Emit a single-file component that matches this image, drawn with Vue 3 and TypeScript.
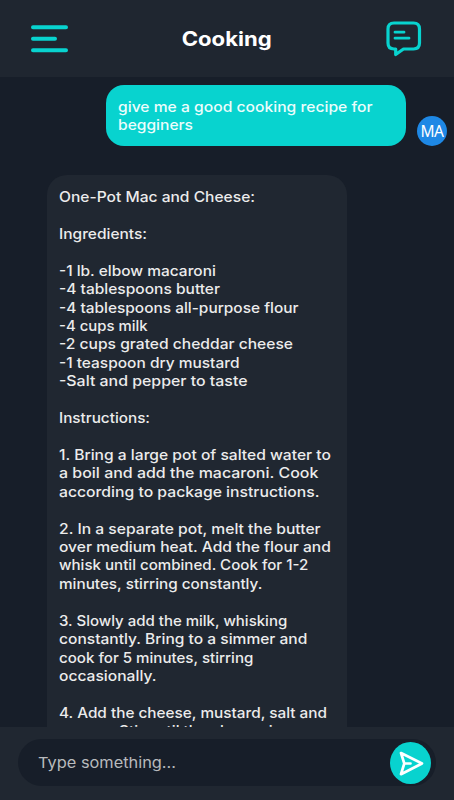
<script setup lang="ts">
interface Line {
  text: string
  width: number
}

const BODY_FONT = '500 14.5px Inter'
const context = document.createElement('canvas').getContext('2d')

// Horizontal stretch that makes a line of text fill its designed width
function stretch(line: Line, font: string = BODY_FONT): string {
  if (!context || !line.text) return 'none'
  context.font = font
  const natural = context.measureText(line.text).width
  return `scaleX(${(line.width / natural).toFixed(4)})`
}

const title: Line = { text: 'Cooking', width: 90 }
const placeholder: Line = { text: 'Type something...', width: 138 }

const question: Line[] = [
  { text: 'give me a good cooking recipe for', width: 254.5 },
  { text: 'begginers', width: 75 },
]

const answer: Line[] = [
  { text: 'One-Pot Mac and Cheese:', width: 196 },
  { text: '', width: 0 },
  { text: 'Ingredients:', width: 88 },
  { text: '', width: 0 },
  { text: '-1 lb. elbow macaroni', width: 157 },
  { text: '-4 tablespoons butter', width: 161 },
  { text: '-4 tablespoons all-purpose flour', width: 239.5 },
  { text: '-4 cups milk', width: 88.5 },
  { text: '-2 cups grated cheddar cheese', width: 234 },
  { text: '-1 teaspoon dry mustard', width: 180.5 },
  { text: '-Salt and pepper to taste', width: 188.5 },
  { text: '', width: 0 },
  { text: 'Instructions:', width: 91 },
  { text: '', width: 0 },
  { text: '1. Bring a large pot of salted water to', width: 272 },
  { text: 'a boil and add the macaroni. Cook', width: 259.5 },
  { text: 'according to package instructions.', width: 260.5 },
  { text: '', width: 0 },
  { text: '2. In a separate pot, melt the butter', width: 262 },
  { text: 'over medium heat. Add the flour and', width: 272 },
  { text: 'whisk until combined. Cook for 1-2', width: 249.5 },
  { text: 'minutes, stirring constantly.', width: 203.5 },
  { text: '', width: 0 },
  { text: '3. Slowly add the milk, whisking', width: 228.5 },
  { text: 'constantly. Bring to a simmer and', width: 248.5 },
  { text: 'cook for 5 minutes, stirring', width: 194.5 },
  { text: 'occasionally.', width: 97.5 },
  { text: '', width: 0 },
  { text: '4. Add the cheese, mustard, salt and', width: 268.5 },
  { text: 'pepper. Stir until the cheese is', width: 222 },
]
</script>

<template>
  <div class="screen">
    <header class="header">
      <svg class="menu" viewBox="0 0 38 30" width="38" height="30">
        <path d="M3 3.2H36M3 14.7H25M3 26.2H36" />
      </svg>
      <h1 class="title" :style="{ transform: stretch(title, '700 20px Inter') }">{{ title.text }}</h1>
      <svg class="chat" viewBox="0 0 36 36" width="36" height="36">
        <path class="outline" d="M8 2H27.5Q33.5 2 33.5 8V22Q33.5 28 27.5 28H17.5L9.7 33.5V28H8Q2 28 2 22V8Q2 2 8 2Z" />
        <path class="rows" d="M9 11.2H18M9 17.2H23" />
      </svg>
    </header>

    <main class="chat-list">
      <div class="row user">
        <div class="bubble sent">
          <p v-for="(line, i) in question" :key="i" class="line" :style="{ transform: stretch(line) }">{{ line.text }}</p>
        </div>
        <div class="avatar">MA</div>
      </div>
      <div class="bubble received">
        <p v-for="(line, i) in answer" :key="i" class="line" :style="{ transform: stretch(line) }">{{ line.text }}</p>
      </div>
    </main>

    <footer class="footer">
      <div class="input">
        <span class="placeholder" :style="{ transform: stretch(placeholder, '400 15px Inter') }">{{ placeholder.text }}</span>
        <button class="send" aria-label="Send">
          <svg viewBox="0 0 41 42" width="41" height="42">
            <path d="M11 11L32 21.5L11 32.2L14.3 21.5ZM14.3 21.5H20.5" />
          </svg>
        </button>
      </div>
    </footer>
  </div>
</template>

<style>
body {
  margin: 0;
  background: #171e29;
}
</style>

<style scoped>
.screen {
  box-sizing: border-box;
  width: 454px;
  height: 800px;
  display: flex;
  flex-direction: column;
  overflow: hidden;
  background: #171e29;
  color: #ececec;
  font-family: Inter, "Liberation Sans", sans-serif;
}
.header {
  box-sizing: border-box;
  flex: 0 0 77px;
  display: grid;
  grid-template-columns: 38px 1fr 36px;
  align-items: center;
  padding: 0 32px 0 30px;
  background: #1f2630;
}
.menu {
  fill: none;
  stroke: #08d3cf;
  stroke-width: 4;
  stroke-linecap: round;
}
.title {
  margin: 0;
  justify-self: center;
  font-size: 20px;
  line-height: 26px;
  font-weight: 700;
  color: #fff;
}
.chat {
  fill: none;
  stroke: #08d3cf;
  stroke-linejoin: round;
  stroke-linecap: round;
}
.outline {
  stroke-width: 3.2;
}
.rows {
  stroke-width: 2.8;
}
.chat-list {
  flex: 1;
  min-height: 0;
  overflow: hidden;
  display: flex;
  flex-direction: column;
  gap: 29px;
  padding-top: 8px;
}
.row {
  flex: none;
  display: flex;
  justify-content: flex-end;
  align-items: flex-end;
  gap: 11px;
  padding-right: 7px;
}
.bubble {
  box-sizing: border-box;
  flex: none;
  width: 300px;
  padding: 13px 12px 12px;
}
.sent {
  height: 61px;
  border-radius: 18px;
  background: #08d3cf;
  color: #ecfdfc;
}
.received {
  margin-left: 47px;
  border-radius: 20px;
  background: #202731;
}
.line {
  width: max-content;
  margin: 0;
  height: 18.43px;
  line-height: 18.43px;
  font-size: 14.5px;
  font-weight: 500;
  white-space: nowrap;
  transform-origin: left center;
}
.avatar {
  width: 30px;
  height: 30px;
  border-radius: 50%;
  background: #1e88e5;
  color: #fff;
  font: 15.5px/30px "Noto Sans", sans-serif;
  letter-spacing: -0.6px;
  text-align: center;
}
.footer {
  box-sizing: border-box;
  flex: 0 0 73px;
  padding: 12px 18px 0;
  background: #202731;
}
.input {
  box-sizing: border-box;
  height: 47px;
  display: flex;
  align-items: center;
  justify-content: space-between;
  padding: 0 5px 0 20px;
  border-radius: 24px;
  background: #171e29;
}
.placeholder {
  font-size: 15px;
  color: #b8babd;
  transform-origin: left center;
}
.send {
  width: 41px;
  height: 42px;
  padding: 0;
  border: 0;
  border-radius: 50%;
  background: #08d3cf;
}
.send svg {
  display: block;
  fill: none;
  stroke: #fff;
  stroke-width: 2.7;
  stroke-linecap: round;
  stroke-linejoin: round;
}
</style>
